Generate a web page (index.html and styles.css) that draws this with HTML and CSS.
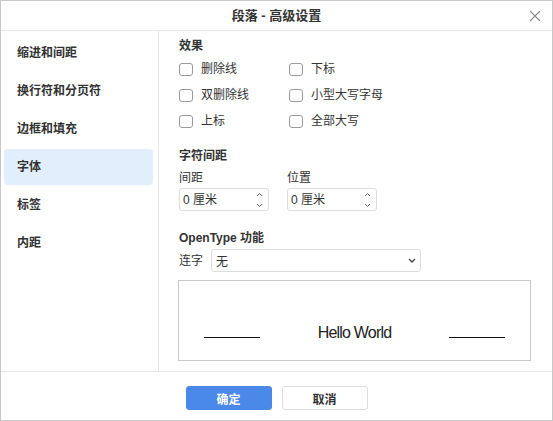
FILE: index.html
```html
<!DOCTYPE html>
<html lang="zh-CN">
<head>
<meta charset="utf-8">
<title>段落 - 高级设置</title>
<link rel="stylesheet" href="styles.css">
</head>
<body>
<div class="window">
  <header class="titlebar">
    <span class="title">段落 - 高级设置</span>
    <button class="close" aria-label="关闭">
      <svg width="12" height="12" viewBox="0 0 12 12"><path d="M1 1 L11 11 M11 1 L1 11" stroke="#8a8a8a" stroke-width="1.1" fill="none"/></svg>
    </button>
  </header>
  <div class="body">
    <nav class="sidebar">
      <div class="nav-item">缩进和间距</div>
      <div class="nav-item">换行符和分页符</div>
      <div class="nav-item">边框和填充</div>
      <div class="nav-item active">字体</div>
      <div class="nav-item">标签</div>
      <div class="nav-item">内距</div>
    </nav>
    <main class="content">
      <div class="section-title">效果</div>
      <div class="checks">
        <label class="check"><span class="box"></span><span class="check-text">删除线</span></label>
        <label class="check"><span class="box"></span><span class="check-text">下标</span></label>
        <label class="check"><span class="box"></span><span class="check-text">双删除线</span></label>
        <label class="check"><span class="box"></span><span class="check-text">小型大写字母</span></label>
        <label class="check"><span class="box"></span><span class="check-text">上标</span></label>
        <label class="check"><span class="box"></span><span class="check-text">全部大写</span></label>
      </div>
      <div class="section-title spacing-title">字符间距</div>
      <div class="fields">
        <div class="field">
          <div class="field-label">间距</div>
          <div class="spin">
            <span class="spin-value">0 厘米</span>
            <svg class="spin-arrows" width="7" height="18" viewBox="0 0 7 18"><path d="M1 5 L3.5 2.5 L6 5 M1 13 L3.5 15.5 L6 13" stroke="#666" stroke-width="1" fill="none"/></svg>
          </div>
        </div>
        <div class="field">
          <div class="field-label">位置</div>
          <div class="spin">
            <span class="spin-value">0 厘米</span>
            <svg class="spin-arrows" width="7" height="18" viewBox="0 0 7 18"><path d="M1 5 L3.5 2.5 L6 5 M1 13 L3.5 15.5 L6 13" stroke="#666" stroke-width="1" fill="none"/></svg>
          </div>
        </div>
      </div>
      <div class="section-title opentype-title">OpenType 功能</div>
      <div class="select-row">
        <span class="select-label">连字</span>
        <div class="select">
          <span class="select-value">无</span>
          <svg class="select-arrow" width="8" height="5" viewBox="0 0 8 5"><path d="M1 1 L4 4 L7 1" stroke="#444" stroke-width="1.3" fill="none"/></svg>
        </div>
      </div>
      <div class="preview">
        <span class="rule"></span>
        <span class="sample">Hello World</span>
        <span class="rule"></span>
      </div>
    </main>
  </div>
  <footer class="footer">
    <button class="btn primary">确定</button>
    <button class="btn">取消</button>
  </footer>
</div>
</body>
</html>
```

FILE: styles.css
```css
* { box-sizing: border-box; }
html, body { margin: 0; padding: 0; background: #fff; }
body {
  font-family: "Liberation Sans", "Noto Sans CJK SC", sans-serif;
  font-size: 12px;
  color: #333;
}
.window {
  width: 553px;
  height: 421px;
  border: 1px solid #c8c8c8;
  display: flex;
  flex-direction: column;
  background: #fff;
}
.titlebar {
  height: 30px;
  flex: none;
  border-bottom: 1px solid #e6e6e6;
  display: flex;
  align-items: center;
  justify-content: center;
  position: relative;
}
.title {
  font-size: 13px;
  font-weight: bold;
  color: #333;
  line-height: 16px;
}
.close {
  position: absolute;
  right: 10px;
  top: 8px;
  width: 14px;
  height: 14px;
  padding: 0;
  border: none;
  background: none;
  display: flex;
  align-items: center;
  justify-content: center;
}
.body {
  flex: 1;
  display: flex;
  border-bottom: 1px solid #e6e6e6;
  min-height: 0;
}
.sidebar {
  width: 158px;
  flex: none;
  border-right: 1px solid #e6e6e6;
  padding: 4px 5px 0 3px;
  display: flex;
  flex-direction: column;
  gap: 2px;
}
.nav-item {
  height: 36px;
  line-height: 36px;
  padding-left: 13px;
  border-radius: 4px;
  font-weight: bold;
  color: #333;
}
.nav-item.active { background: #e1eefc; }
.content {
  flex: 1;
  padding: 7px 22px 0 20px;
  display: flex;
  flex-direction: column;
}
.section-title {
  height: 16px;
  line-height: 16px;
  font-weight: bold;
  color: #333;
}
.checks {
  margin-top: 2px;
  display: grid;
  grid-template-columns: 110px auto;
  grid-auto-rows: 26px;
}
.check {
  display: flex;
  align-items: center;
}
.box {
  width: 14px;
  height: 13px;
  border: 1px solid #9a9a9a;
  border-radius: 3px;
  margin-right: 8px;
  background: #fff;
}
.check-text { line-height: 16px; }
.spacing-title { margin-top: 14px; }
.fields {
  display: flex;
  gap: 18px;
  margin-top: 6px;
}
.field { width: 90px; }
.field-label { height: 16px; line-height: 16px; }
.spin {
  margin-top: 2px;
  height: 23px;
  border: 1px solid #dcdcdc;
  border-radius: 3px;
  display: flex;
  align-items: center;
  justify-content: space-between;
  padding: 0 5px 0 3px;
}
.spin-value { line-height: 16px; }
.opentype-title { margin-top: 19px; }
.select-row {
  margin-top: 3px;
  display: flex;
  align-items: center;
  gap: 8px;
}
.select-label { line-height: 16px; }
.select {
  width: 210px;
  height: 23px;
  border: 1px solid #dcdcdc;
  border-radius: 3px;
  display: flex;
  align-items: center;
  justify-content: space-between;
  padding: 0 4px 0 4px;
}
.preview {
  margin-top: 8px;
  margin-left: -1px;
  height: 81px;
  width: 353px;
  border: 1px solid #c8c8c8;
  display: flex;
  align-items: baseline;
  justify-content: space-between;
  padding: 44px 25px 0 25px;
}
.rule {
  display: inline-block;
  width: 56px;
  height: 1px;
  border-bottom: 1px solid #111;
}
.sample {
  font-family: "Liberation Sans", sans-serif;
  font-size: 16px;
  letter-spacing: -0.8px;
  line-height: 16px;
  color: #222;
}
.footer {
  height: 48px;
  flex: none;
  display: flex;
  justify-content: center;
  gap: 10px;
  padding-top: 14px;
}
.btn {
  width: 86px;
  height: 24px;
  border: 1px solid #dddddd;
  border-radius: 3px;
  background: #fff;
  color: #333;
  font-family: "Liberation Sans", "Noto Sans CJK SC", sans-serif;
  font-size: 12px;
  font-weight: bold;
  padding: 0;
}
.btn.primary {
  background: #4a89e8;
  border-color: #4a89e8;
  color: #fff;
}
```
